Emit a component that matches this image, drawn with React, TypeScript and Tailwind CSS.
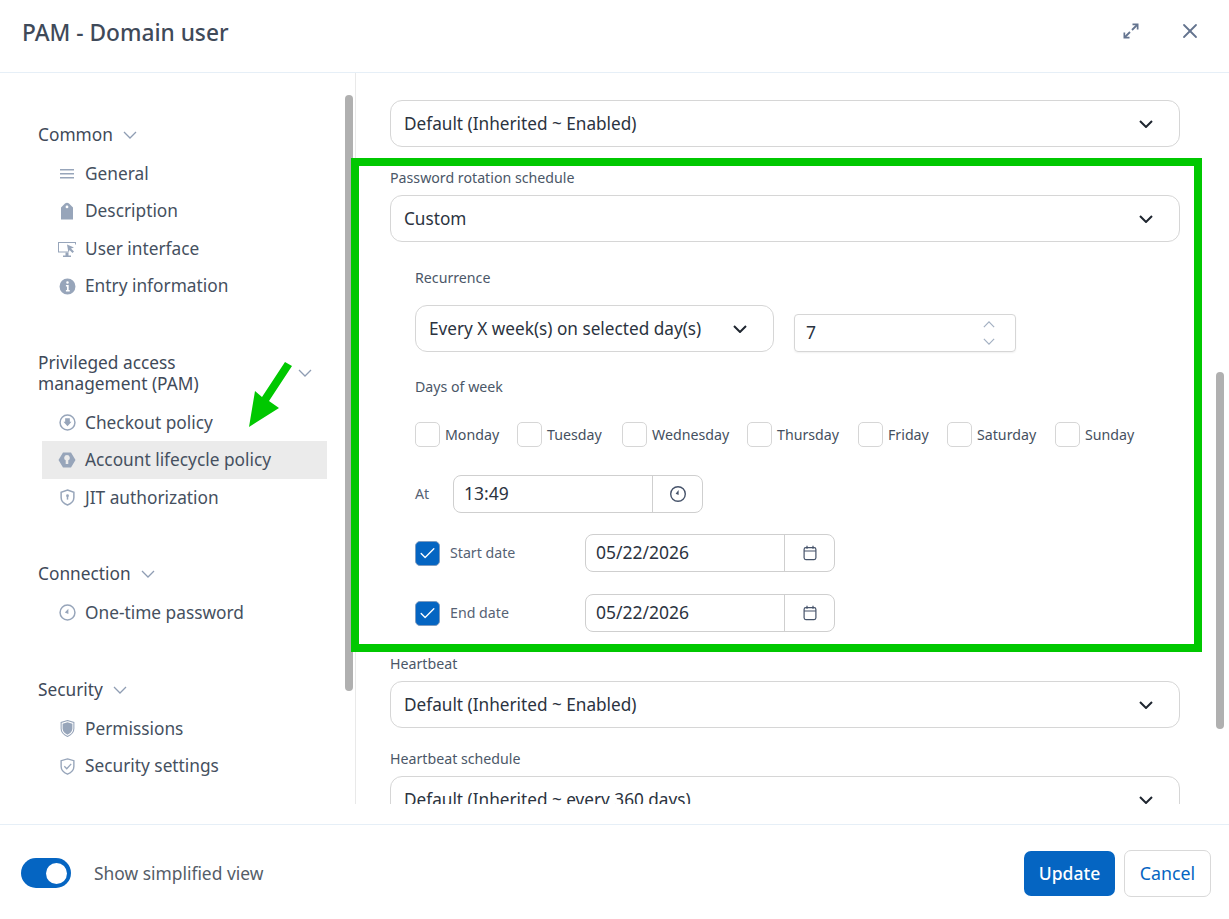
import { X, Check } from "lucide-react";
import type { ReactNode } from "react";

const iconCls = "w-[17px] h-[17px] text-[#97a5ba]";

const GeneralIcon = () => (
  <svg viewBox="0 0 16 16" className="w-4 h-4 text-[#97a5ba]" fill="currentColor">
    <rect x="1" y="3" width="14" height="1.5" />
    <rect x="1" y="7" width="14" height="1.5" />
    <rect x="1" y="11" width="14" height="1.5" />
  </svg>
);

const TagIcon = () => (
  <svg viewBox="0 0 14 18" className="w-[14px] h-[18px] text-[#97a5ba]" fill="currentColor">
    <path fillRule="evenodd" d="M1 17.500V5.500L5 1.500Q7 0 9 1.500L13 5.500V17.500ZM7 3.500a1.400 1.400 0 1 0 0 2.800a1.400 1.400 0 0 0 0-2.800Z" />
  </svg>
);

const MonitorIcon = () => (
  <svg viewBox="0 0 20 16" className="w-5 h-4 text-[#97a5ba]" fill="currentColor">
    <path d="M1 1h18v2.500h-1V2H2v8.500h9v1H1Z" />
    <path d="M10 3.500l7 3-3 1 3 3-1.500 1.500-3-3-1 3Z" />
    <path d="M6 14.500h8V16H6ZM8.500 11.500h3v3h-3Z" />
  </svg>
);

const InfoIcon = () => (
  <svg viewBox="0 0 16 16" className={iconCls} fill="currentColor">
    <path fillRule="evenodd" d="M8 .5a7.500 7.500 0 1 0 0 15a7.500 7.500 0 0 0 0-15ZM8 3a1.200 1.200 0 1 1 0 2.400A1.200 1.200 0 0 1 8 3ZM6.500 6.500h2.600V11.200h1V12.600H6.500v-1.400h1V7.900h-1Z" />
  </svg>
);

const CheckoutIcon = () => (
  <svg viewBox="0 0 16 16" className={iconCls}>
    <circle cx="8" cy="8" r="7" fill="none" stroke="currentColor" strokeWidth="1.400" />
    <path d="M5.800 4h4.400v3.400h1.600L8 11.600 4.200 7.400h1.600Z" fill="currentColor" />
  </svg>
);

const LifecycleIcon = () => (
  <svg viewBox="0 0 18 16" className="w-[18px] h-4 text-[#97a5ba]" fill="currentColor">
    <path fillRule="evenodd" d="M5 .5h8L17.500 8 13 15.500H5L.5 8ZM9 3a2.800 2.800 0 0 0-1.300 5.300V12h2.600V8.300A2.800 2.800 0 0 0 9 3Z" />
  </svg>
);

const JitIcon = () => (
  <svg viewBox="0 0 16 16" className={iconCls}>
    <path d="M8 1l6 2v5c0 3.600-2.500 5.800-6 7C4.500 13.800 2 11.600 2 8V3Z" fill="none" stroke="currentColor" strokeWidth="1.400" />
    <circle cx="8" cy="6.300" r="1.300" fill="currentColor" />
    <rect x="7.300" y="6.500" width="1.400" height="3.500" fill="currentColor" />
  </svg>
);

const OtpIcon = () => (
  <svg viewBox="0 0 16 16" className={iconCls}>
    <circle cx="8" cy="8" r="7" fill="none" stroke="currentColor" strokeWidth="1.400" />
    <path d="M8.800 4.500V9.500L5.500 8Z" fill="currentColor" />
  </svg>
);

const ShieldFillIcon = () => (
  <svg viewBox="0 0 16 16" className={iconCls}>
    <path d="M8 .5l6 1.800V8c0 3.700-2.500 6-6 7.500C4.500 14 2 11.700 2 8V2.300Z" fill="none" stroke="currentColor" strokeWidth="1" />
    <path d="M8 2.200l4.600 1.300V8c0 2.800-2 4.700-4.600 5.800C5.400 12.700 3.400 10.800 3.400 8V3.500Z" fill="currentColor" />
  </svg>
);

const ShieldCheckIcon = () => (
  <svg viewBox="0 0 16 16" className={iconCls} fill="none" stroke="currentColor">
    <path d="M8 .8l6 1.700V8c0 3.500-2.500 5.800-6 7.200C4.500 13.800 2 11.500 2 8V2.500Z" strokeWidth="1.300" />
    <path d="M5 7.800l2.300 2.300L11.500 5.500" strokeWidth="1.200" />
  </svg>
);

const ClockIcon = () => (
  <svg viewBox="0 0 18 18" className="w-[18px] h-[18px] text-[#46536a]">
    <circle cx="9" cy="9" r="7.300" fill="none" stroke="currentColor" strokeWidth="1.400" />
    <path d="M9.600 5v5L6.600 8.700Z" fill="currentColor" />
  </svg>
);

const CalendarIcon = () => (
  <svg viewBox="0 0 16 16" className="w-4 h-4 text-[#46536a]" fill="none" stroke="currentColor" strokeWidth="1.200">
    <rect x="2.100" y="2.600" width="11.800" height="12" rx="1.800" />
    <path d="M2.100 6h11.800M5 .8v3M11 .8v3" />
  </svg>
);

const ExpandIcon = () => (
  <svg viewBox="0 0 16 16" className="w-4 h-4 text-[#64748f]" fill="none" stroke="currentColor">
    <path d="M9 7L14 2" strokeWidth="1.800" />
    <path d="M2 14l5-5" strokeWidth="1.800" />
    <path d="M9.500 0.500H15.500V6.500H13.800V2.200H9.500Z" fill="currentColor" stroke="none" />
    <path d="M0.500 9.500H2.200V13.800H6.500V15.500H0.500Z" fill="currentColor" stroke="none" />
  </svg>
);

function Chevron({ className, up }: { className?: string; up?: boolean }) {
  return (
    <svg viewBox="0 0 14 8" className={className} fill="none" stroke="currentColor">
      <path d={up ? "M1 7l6-6 6 6" : "M1 1l6 6 6-6"} />
    </svg>
  );
}

const NavChevron = () => <Chevron className="w-[14px] h-2 text-[#8f9db3] stroke-[1.3]" />;

function NavItem({ icon, label, active }: { icon: ReactNode; label: string; active?: boolean }) {
  return (
    <div className={`h-[37.5px] flex items-center pl-[15px] ${active ? "bg-[#ebebeb]" : ""}`}>
      <span className="w-5 flex justify-center shrink-0">{icon}</span>
      <span className="ml-[8px] text-[17.3px] text-[#455060]">{label}</span>
    </div>
  );
}

function NavGroup({ title, children, className }: { title: ReactNode; children: ReactNode; className?: string }) {
  return (
    <div className={className}>
      <div className="flex items-center gap-[10px] text-[17.3px] leading-[21px] text-[#3f4a59] pb-[10px] pl-[38px]">{title}</div>
      <div className="ml-[42px] w-[285px]">{children}</div>
    </div>
  );
}

function Select({ value, className }: { value: string; className?: string }) {
  return (
    <div className={`flex items-center justify-between border border-[#d6d6d6] rounded-[12px] bg-white text-[17.2px] text-[#2b3340] pl-[13px] ${className ?? ""}`}>
      <span>{value}</span>
      <Chevron className="w-[14px] h-2 text-[#1f2630] mr-[26px] stroke-2" />
    </div>
  );
}

function DayBox({ label, className }: { label: string; className?: string }) {
  return (
    <div className={`flex items-center ${className ?? ""}`}>
      <span className="w-[25px] h-[25px] rounded-[5px] border border-[#d6d6d6] bg-white" />
      <span className="ml-[5px] text-[14.200px] text-[#455060]">{label}</span>
    </div>
  );
}

function PickerInput({ value, icon, className }: { value: string; icon: ReactNode; className?: string }) {
  return (
    <div className={`flex h-[38px] w-[250px] rounded-[8px] border border-[#cfcfcf] bg-white text-[17.5px] text-[#2b3340] ${className ?? ""}`}>
      <div className="w-[199px] flex items-center pl-[10px] pb-[2px] border-r border-[#cfcfcf]">{value}</div>
      <div className="flex-1 flex items-center justify-center">{icon}</div>
    </div>
  );
}

function DateRow({ label, className }: { label: string; className?: string }) {
  return (
    <div className={`flex items-center ${className ?? ""}`}>
      <span className="w-[25px] h-[25px] rounded-[5px] bg-[#0565c2] border border-[#7f9cc0] flex items-center justify-center">
        <Check className="w-[19px] h-[19px] text-white" strokeWidth={1.700} />
      </span>
      <span className="ml-[10px] w-[135px] text-[14.200px] text-[#566274]">{label}</span>
      <PickerInput value="05/22/2026" icon={<CalendarIcon />} />
    </div>
  );
}

const Label = ({ children, className }: { children: ReactNode; className?: string }) => (
  <div className={`pt-[1px] text-[14.200px] leading-[20px] text-[#4b5768] ${className ?? ""}`}>{children}</div>
);

export default function App() {
  return (
    <div className="relative w-[1229px] h-[919px] overflow-hidden bg-white flex flex-col font-['Noto_Sans',sans-serif]">
      <header className="h-[73px] shrink-0 border-b border-[#e6eff7] flex items-center justify-between pl-[22px] pb-[6px]">
        <h1 className="text-[22.700px] font-medium text-[#3f4a59]">PAM - Domain user</h1>
        <div className="flex items-center gap-[39px] pr-[27px] mb-[4px]">
          <ExpandIcon />
          <X className="w-[24px] h-[24px] text-[#64748f]" strokeWidth={1.800} />
        </div>
      </header>

      <div className="flex h-[731px] shrink-0 overflow-hidden">
        {/* Left nav */}
        <aside className="relative w-[356px] shrink-0 border-r border-[#e9e9e9] pt-[51px]">
          <NavGroup title={<>Common <NavChevron /></>}>
            <NavItem icon={<GeneralIcon />} label="General" />
            <NavItem icon={<TagIcon />} label="Description" />
            <NavItem icon={<MonitorIcon />} label="User interface" />
            <NavItem icon={<InfoIcon />} label="Entry information" />
          </NavGroup>
          <NavGroup
            className="mt-[46.75px]"
            title={
              <>
                <span className="w-[250px]">Privileged access management (PAM)</span>
                <NavChevron />
              </>
            }
          >
            <NavItem icon={<CheckoutIcon />} label="Checkout policy" />
            <NavItem icon={<LifecycleIcon />} label="Account lifecycle policy" active />
            <NavItem icon={<JitIcon />} label="JIT authorization" />
          </NavGroup>
          <NavGroup className="mt-[46.75px]" title={<>Connection <NavChevron /></>}>
            <NavItem icon={<OtpIcon />} label="One-time password" />
          </NavGroup>
          <NavGroup className="mt-[47.5px]" title={<>Security <NavChevron /></>}>
            <NavItem icon={<ShieldFillIcon />} label="Permissions" />
            <NavItem icon={<ShieldCheckIcon />} label="Security settings" />
          </NavGroup>
          <div className="absolute left-[345px] top-[22px] w-[8px] h-[596px] rounded-full bg-[#b0b0b0]" />
        </aside>

        {/* Right form */}
        <section className="relative flex-1 pt-[27px] pl-[34px]">
          <div className="w-[790px]">
            <Select value="Default (Inherited ~ Enabled)" className="h-[47px]" />
            <Label className="mt-[20px]">Password rotation schedule</Label>
            <Select value="Custom" className="h-[47px] mt-[7px]" />

            <div className="pl-[25px]">
              <Label className="mt-[25px]">Recurrence</Label>
              <div className="flex items-end gap-[20px] mt-[17px]">
                <Select value="Every X week(s) on selected day(s)" className="h-[47px] w-[359px]" />
                <div className="w-[222px] h-[38px] rounded-[4px] border border-[#d6d6d6] shadow-[0_1px_2px_rgba(0,0,0,0.06)] flex items-center justify-between pl-[11px] pr-[20px] text-[17.5px] text-[#2b3340]">
                  <span className="pb-[2px]">7</span>
                  <span className="flex flex-col gap-[10px] text-[#a3b0c2]">
                    <Chevron up className="w-3 h-[7px] stroke-[1.4]" />
                    <Chevron className="w-3 h-[7px] stroke-[1.4]" />
                  </span>
                </div>
              </div>

              <Label className="mt-[24px]">Days of week</Label>
              <div className="flex mt-[25px]">
                <DayBox label="Monday" className="w-[102px]" />
                <DayBox label="Tuesday" className="w-[105px]" />
                <DayBox label="Wednesday" className="w-[125px]" />
                <DayBox label="Thursday" className="w-[111px]" />
                <DayBox label="Friday" className="w-[89px]" />
                <DayBox label="Saturday" className="w-[108px]" />
                <DayBox label="Sunday" />
              </div>

              <div className="flex items-center mt-[28px]">
                <span className="w-[38px] text-[14.200px] text-[#566274]">At</span>
                <PickerInput value="13:49" icon={<ClockIcon />} />
              </div>

              <DateRow label="Start date" className="mt-[21px]" />
              <DateRow label="End date" className="mt-[22px]" />
            </div>

            <Label className="mt-[21px]">Heartbeat</Label>
            <Select value="Default (Inherited ~ Enabled)" className="h-[47px] mt-[7px]" />
            <Label className="mt-[20px]">Heartbeat schedule</Label>
            <Select value="Default (Inherited ~ every 360 days)" className="h-[47px] mt-[7px]" />
          </div>
          <div className="absolute left-[860px] top-[299px] w-[8px] h-[357px] rounded-full bg-[#b0b0b0]" />
        </section>
      </div>

      <div className="h-[21px] shrink-0 border-b border-[#e6eff7]" />

      <footer className="flex-1 flex items-center justify-between pl-[21px] pr-[18px] pt-[3px]">
        <div className="flex items-center mb-[1px]">
          <span className="w-[50px] h-[30px] rounded-full bg-[#0565c2] flex items-center justify-end pr-[4px]">
            <span className="w-[21px] h-[21px] rounded-full bg-white" />
          </span>
          <span className="ml-[23px] text-[17.400px] text-[#555d68]">Show simplified view</span>
        </div>
        <div className="flex items-center gap-[9px]">
          <button className="w-[91px] h-[45px] rounded-[7px] bg-[#0565c2] text-white text-[17.500px] font-medium">Update</button>
          <button className="w-[87px] h-[47px] rounded-[7px] border border-[#d9d9d9] bg-white text-[#0565c2] text-[17.800px]">Cancel</button>
        </div>
      </footer>

      {/* Annotations over the screenshot */}
      <div className="absolute left-[351px] top-[158px] w-[851px] h-[494px] border-[8px] border-[#00c800] pointer-events-none" />
      <svg className="absolute left-[245px] top-[358px] pointer-events-none" width="50" height="72" viewBox="0 0 50 72">
        <path d="M40 4L47 8 24 43 34 50 4 69 10 33 17 39Z" fill="#00c800" />
      </svg>
    </div>
  );
}
